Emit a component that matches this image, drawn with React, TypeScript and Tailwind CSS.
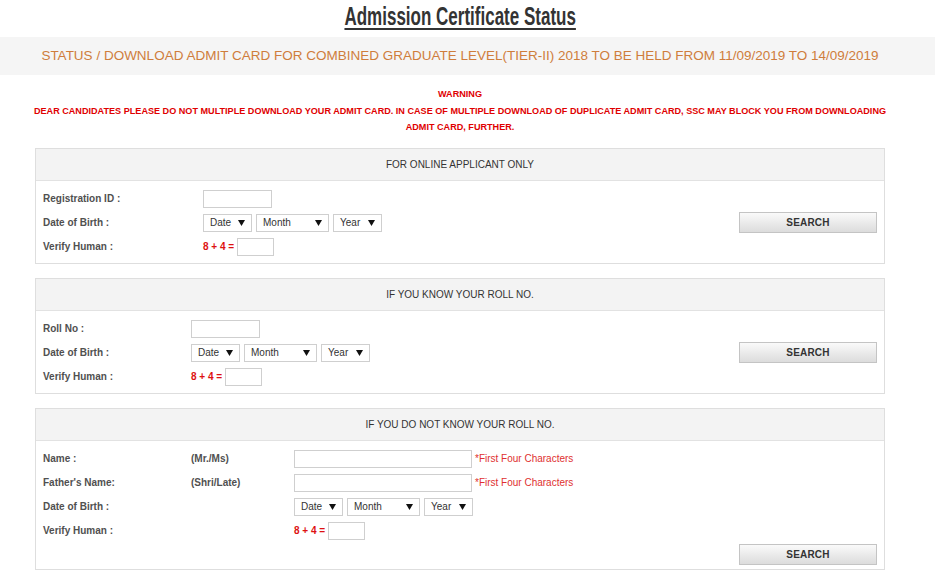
import React from 'react'

const Arrow = () => (
  <svg width="7" height="6" viewBox="0 0 7 6" className="shrink-0">
    <path d="M0 0 L7 0 L3.5 6 Z" fill="#111" />
  </svg>
)

const Select = ({ label, w }: { label: string; w: string }) => (
  <div
    className={`${w} h-[18px] border border-[#cfcfcf] bg-white flex items-center justify-between pl-[6px] pr-[6px] text-[10px] text-[#333]`}
  >
    <span>{label}</span>
    <Arrow />
  </div>
)

const DobSelects = () => (
  <div className="flex items-center gap-[4px]">
    <Select label="Date" w="w-[49px]" />
    <Select label="Month" w="w-[73px]" />
    <Select label="Year" w="w-[49px]" />
  </div>
)

const TextBox = ({ w }: { w: string }) => (
  <div className={`${w} h-[18px] border border-[#cfcfcf] bg-white`} />
)

const Captcha = () => (
  <div className="flex items-center gap-[3px]">
    <span className="text-[10px] font-bold text-[#d11] whitespace-nowrap">8 + 4 =</span>
    <TextBox w="w-[37px]" />
  </div>
)

const SearchButton = () => (
  <button className="w-[138px] h-[21px] border border-[#c4c4c4] bg-gradient-to-b from-[#fafafa] to-[#dcdcdc] text-[10px] font-bold text-[#333] tracking-[0.2px]">
    SEARCH
  </button>
)

const Label = ({ children, w }: { children: React.ReactNode; w: string }) => (
  <div className={`${w} shrink-0 text-[10px] font-bold text-[#505050] whitespace-nowrap`}>{children}</div>
)

const Row = ({ children }: { children: React.ReactNode }) => (
  <div className="h-[24px] flex items-center">{children}</div>
)

const CardHeader = ({ title }: { title: string }) => (
  <div className="h-[32px] bg-[#f3f3f3] border-b border-[#e2e2e2] flex items-center justify-center text-[10px] text-[#333]">
    {title}
  </div>
)

const Card = ({ title, children }: { title: string; children: React.ReactNode }) => (
  <div className="border border-[#dedede] bg-white">
    <CardHeader title={title} />
    {children}
  </div>
)

export default function App() {
  return (
    <div className="w-[935px] min-h-[583px] bg-white font-['Liberation_Sans',Arial,sans-serif]">
      <div className="w-[920px] h-[37px] flex justify-center pt-[1px]">
        <h1 className="inline-block scale-x-[0.68] font-bold text-[25px] leading-[30px] text-[#333] underline decoration-2 underline-offset-[3px] whitespace-nowrap">
          Admission Certificate Status
        </h1>
      </div>

      <div className="w-full h-[38px] bg-[#f5f5f5]">
        <div className="w-[920px] h-full flex items-center justify-center text-[13.5px] text-[#cf7d3c]">
          STATUS / DOWNLOAD ADMIT CARD FOR COMBINED GRADUATE LEVEL(TIER-II) 2018 TO BE HELD FROM 11/09/2019 TO 14/09/2019
        </div>
      </div>

      <div className="w-[920px] mt-[11px] text-center text-[9.1px] font-bold leading-[16.5px] text-[#e00000] whitespace-nowrap">
        <div>WARNING</div>
        <div>
          DEAR CANDIDATES PLEASE DO NOT MULTIPLE DOWNLOAD YOUR ADMIT CARD. IN CASE OF MULTIPLE DOWNLOAD OF DUPLICATE ADMIT
          CARD, SSC MAY BLOCK YOU FROM DOWNLOADING
        </div>
        <div>ADMIT CARD, FURTHER.</div>
      </div>

      <div className="w-[920px] px-[35px] mt-[12px] flex flex-col gap-[14px]">
        <Card title="FOR ONLINE APPLICANT ONLY">
          <div className="flex items-center justify-between pl-[7px] pr-[7px] pt-[6px] pb-[4px]">
            <div>
              <Row>
                <Label w="w-[160px]">Registration ID :</Label>
                <TextBox w="w-[69px]" />
              </Row>
              <Row>
                <Label w="w-[160px]">Date of Birth :</Label>
                <DobSelects />
              </Row>
              <Row>
                <Label w="w-[160px]">Verify Human :</Label>
                <Captcha />
              </Row>
            </div>
            <SearchButton />
          </div>
        </Card>

        <Card title="IF YOU KNOW YOUR ROLL NO.">
          <div className="flex items-center justify-between pl-[7px] pr-[7px] pt-[6px] pb-[4px]">
            <div>
              <Row>
                <Label w="w-[148px]">Roll No :</Label>
                <TextBox w="w-[69px]" />
              </Row>
              <Row>
                <Label w="w-[148px]">Date of Birth :</Label>
                <DobSelects />
              </Row>
              <Row>
                <Label w="w-[148px]">Verify Human :</Label>
                <Captcha />
              </Row>
            </div>
            <SearchButton />
          </div>
        </Card>

        <Card title="IF YOU DO NOT KNOW YOUR ROLL NO.">
          <div className="pl-[7px] pr-[7px] pt-[6px] pb-[2px]">
            <Row>
              <Label w="w-[148px]">Name :</Label>
              <Label w="w-[103px]">(Mr./Ms)</Label>
              <TextBox w="w-[178px]" />
              <span className="ml-[3px] text-[10px] text-[#e03030]">*First Four Characters</span>
            </Row>
            <Row>
              <Label w="w-[148px]">Father's Name:</Label>
              <Label w="w-[103px]">(Shri/Late)</Label>
              <TextBox w="w-[178px]" />
              <span className="ml-[3px] text-[10px] text-[#e03030]">*First Four Characters</span>
            </Row>
            <Row>
              <Label w="w-[251px]">Date of Birth :</Label>
              <DobSelects />
            </Row>
            <Row>
              <Label w="w-[251px]">Verify Human :</Label>
              <Captcha />
            </Row>
            <div className="h-[24px] flex items-center justify-end">
              <SearchButton />
            </div>
          </div>
        </Card>
      </div>
    </div>
  )
}
